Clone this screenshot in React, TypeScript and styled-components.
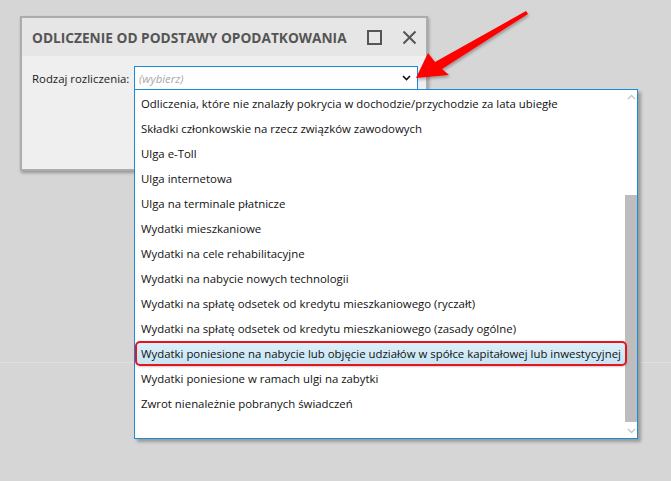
import React from "react";
import styled, { createGlobalStyle } from "styled-components";

const GlobalStyle = createGlobalStyle`
  html, body { margin: 0; padding: 0; }
  body {
    background: #d6d6d6;
    font-family: "Open Sans", "Noto Sans", "Liberation Sans", sans-serif;
    width: 671px;
    height: 481px;
    overflow: hidden;
  }
`;

const Page = styled.div`
  position: relative;
  width: 671px;
  height: 481px;
  padding: 16px 0 0 20px;
  box-sizing: border-box;
`;

const BackdropLine = styled.div`
  position: absolute;
  left: 0;
  right: 0;
  top: 362px;
  height: 1px;
  background: #e0e0e0;
`;

const Dialog = styled.div`
  position: relative;
  width: 408px;
  height: 155px;
  box-sizing: border-box;
  background: #efefef;
  border: 2px solid #acacac;
  box-shadow: 1px 2px 3px rgba(0, 0, 0, 0.3);
  display: flex;
  flex-direction: column;
`;

const TitleBar = styled.div`
  height: 38px;
  background: #e6e6e6;
  display: flex;
  align-items: center;
  padding: 0 5px 0 10px;
  gap: 11px;
`;

const Title = styled.div`
  flex: 1;
  font-size: 13.7px;
  font-weight: 700;
  color: #555555;
  padding-top: 1px;
  white-space: nowrap;
`;

const TitleButton = styled.div`
  width: 24px;
  height: 24px;
  display: flex;
  align-items: center;
  justify-content: center;
`;

const Body = styled.div`
  padding: 10px 10px 0 10px;
  display: flex;
  align-items: center;
`;

const Label = styled.span`
  font-size: 11.4px;
  color: #1b1b1b;
  width: 102px;
  flex: none;
  white-space: nowrap;
`;

const ComboWrap = styled.div`
  position: relative;
`;

const Combo = styled.div`
  width: 284px;
  height: 24px;
  box-sizing: border-box;
  border: 1px solid #1c8bd8;
  background: #ffffff;
  display: flex;
  align-items: center;
  padding: 0 6px 0 4px;
`;

const Placeholder = styled.span`
  flex: 1;
  font-size: 11.4px;
  font-style: italic;
  color: #a9a9a9;
`;

const DropList = styled.div`
  position: absolute;
  top: 23px;
  left: 0;
  width: 504px;
  height: 350px;
  box-sizing: border-box;
  background: #ffffff;
  border: 1px solid #1c8bd8;
  box-shadow: 3px 3px 3px rgba(0, 0, 0, 0.28);
  display: flex;
  z-index: 5;
`;

const Items = styled.div`
  flex: 1;
  min-width: 0;
  display: flex;
  flex-direction: column;
  padding-top: 1px;
`;

const Item = styled.div<{ $active?: boolean }>`
  height: 25px;
  box-sizing: border-box;
  display: flex;
  align-items: center;
  padding-left: ${(p) => (p.$active ? "4px" : "6px")};
  font-size: 11.4px;
  color: #111111;
  white-space: nowrap;
  ${(p) =>
    p.$active &&
    `
    margin-right: -2px;
    position: relative;
    z-index: 1;
    border: 2px solid #e8141c;
    border-radius: 5px;
    background: linear-gradient(#dcf0fa, #c6e5f4);
    box-shadow: 0 1px 2px rgba(0,0,0,0.2);
  `}
`;

const Scrollbar = styled.div`
  width: 12px;
  flex: none;
  display: flex;
  flex-direction: column;
  align-items: center;
`;

const ScrollArrow = styled.div`
  height: 14px;
  display: flex;
  align-items: center;
  justify-content: center;
`;

const Track = styled.div`
  flex: 1;
  width: 12px;
  display: flex;
  flex-direction: column;
  justify-content: flex-end;
`;

const Thumb = styled.div`
  height: 227px;
  background: #bdbdbd;
  margin-bottom: 2px;
`;

const ArrowOverlay = styled.svg`
  position: absolute;
  left: 0;
  top: 0;
  pointer-events: none;
  z-index: 10;
`;

const items = [
  "Odliczenia, które nie znalazły pokrycia w dochodzie/przychodzie za lata ubiegłe",
  "Składki członkowskie na rzecz związków zawodowych",
  "Ulga e-Toll",
  "Ulga internetowa",
  "Ulga na terminale płatnicze",
  "Wydatki mieszkaniowe",
  "Wydatki na cele rehabilitacyjne",
  "Wydatki na nabycie nowych technologii",
  "Wydatki na spłatę odsetek od kredytu mieszkaniowego (ryczałt)",
  "Wydatki na spłatę odsetek od kredytu mieszkaniowego (zasady ogólne)",
  "Wydatki poniesione na nabycie lub objęcie udziałów w spółce kapitałowej lub inwestycyjnej",
  "Wydatki poniesione w ramach ulgi na zabytki",
  "Zwrot nienależnie pobranych świadczeń",
];

export default function App() {
  return (
    <>
      <GlobalStyle />
      <Page>
        <BackdropLine />
        <Dialog>
          <TitleBar>
            <Title>ODLICZENIE OD PODSTAWY OPODATKOWANIA</Title>
            <TitleButton>
              <svg width="15" height="15" viewBox="0 0 15 15">
                <rect x="1" y="1" width="13" height="13" fill="none" stroke="#555" strokeWidth="2" />
              </svg>
            </TitleButton>
            <TitleButton>
              <svg width="15" height="15" viewBox="0 0 15 15">
                <path d="M1.5 1.5 L13.5 13.5 M13.5 1.5 L1.5 13.5" stroke="#555" strokeWidth="2" />
              </svg>
            </TitleButton>
          </TitleBar>
          <Body>
            <Label>Rodzaj rozliczenia:</Label>
            <ComboWrap>
              <Combo>
                <Placeholder>(wybierz)</Placeholder>
                <svg width="9" height="6" viewBox="0 0 9 6">
                  <path d="M1 1 L4.5 4.5 L8 1" fill="none" stroke="#111" strokeWidth="1.6" />
                </svg>
              </Combo>
              <DropList>
                <Items>
                  {items.map((t, i) => (
                    <Item key={t} $active={i === 10}>
                      {t}
                    </Item>
                  ))}
                </Items>
                <Scrollbar>
                  <ScrollArrow>
                    <svg width="9" height="6" viewBox="0 0 9 6">
                      <path d="M1 5 L4.5 1.5 L8 5" fill="none" stroke="#c4c4c4" strokeWidth="1.3" />
                    </svg>
                  </ScrollArrow>
                  <Track>
                    <Thumb />
                  </Track>
                  <ScrollArrow>
                    <svg width="9" height="6" viewBox="0 0 9 6">
                      <path d="M1 1 L4.5 4.5 L8 1" fill="none" stroke="#c4c4c4" strokeWidth="1.3" />
                    </svg>
                  </ScrollArrow>
                </Scrollbar>
              </DropList>
            </ComboWrap>
          </Body>
        </Dialog>
        <ArrowOverlay width="671" height="481" viewBox="0 0 671 481">
          <defs>
            <filter id="sh" x="-20%" y="-20%" width="140%" height="140%">
              <feDropShadow dx="1" dy="2" stdDeviation="1.5" floodColor="#000" floodOpacity="0.3" />
            </filter>
          </defs>
          <polygon
            points="416,78 428,53 435,62 526,11 528,14 442,69 449,75"
            fill="#ff0000"
            filter="url(#sh)"
          />
        </ArrowOverlay>
      </Page>
    </>
  );
}
